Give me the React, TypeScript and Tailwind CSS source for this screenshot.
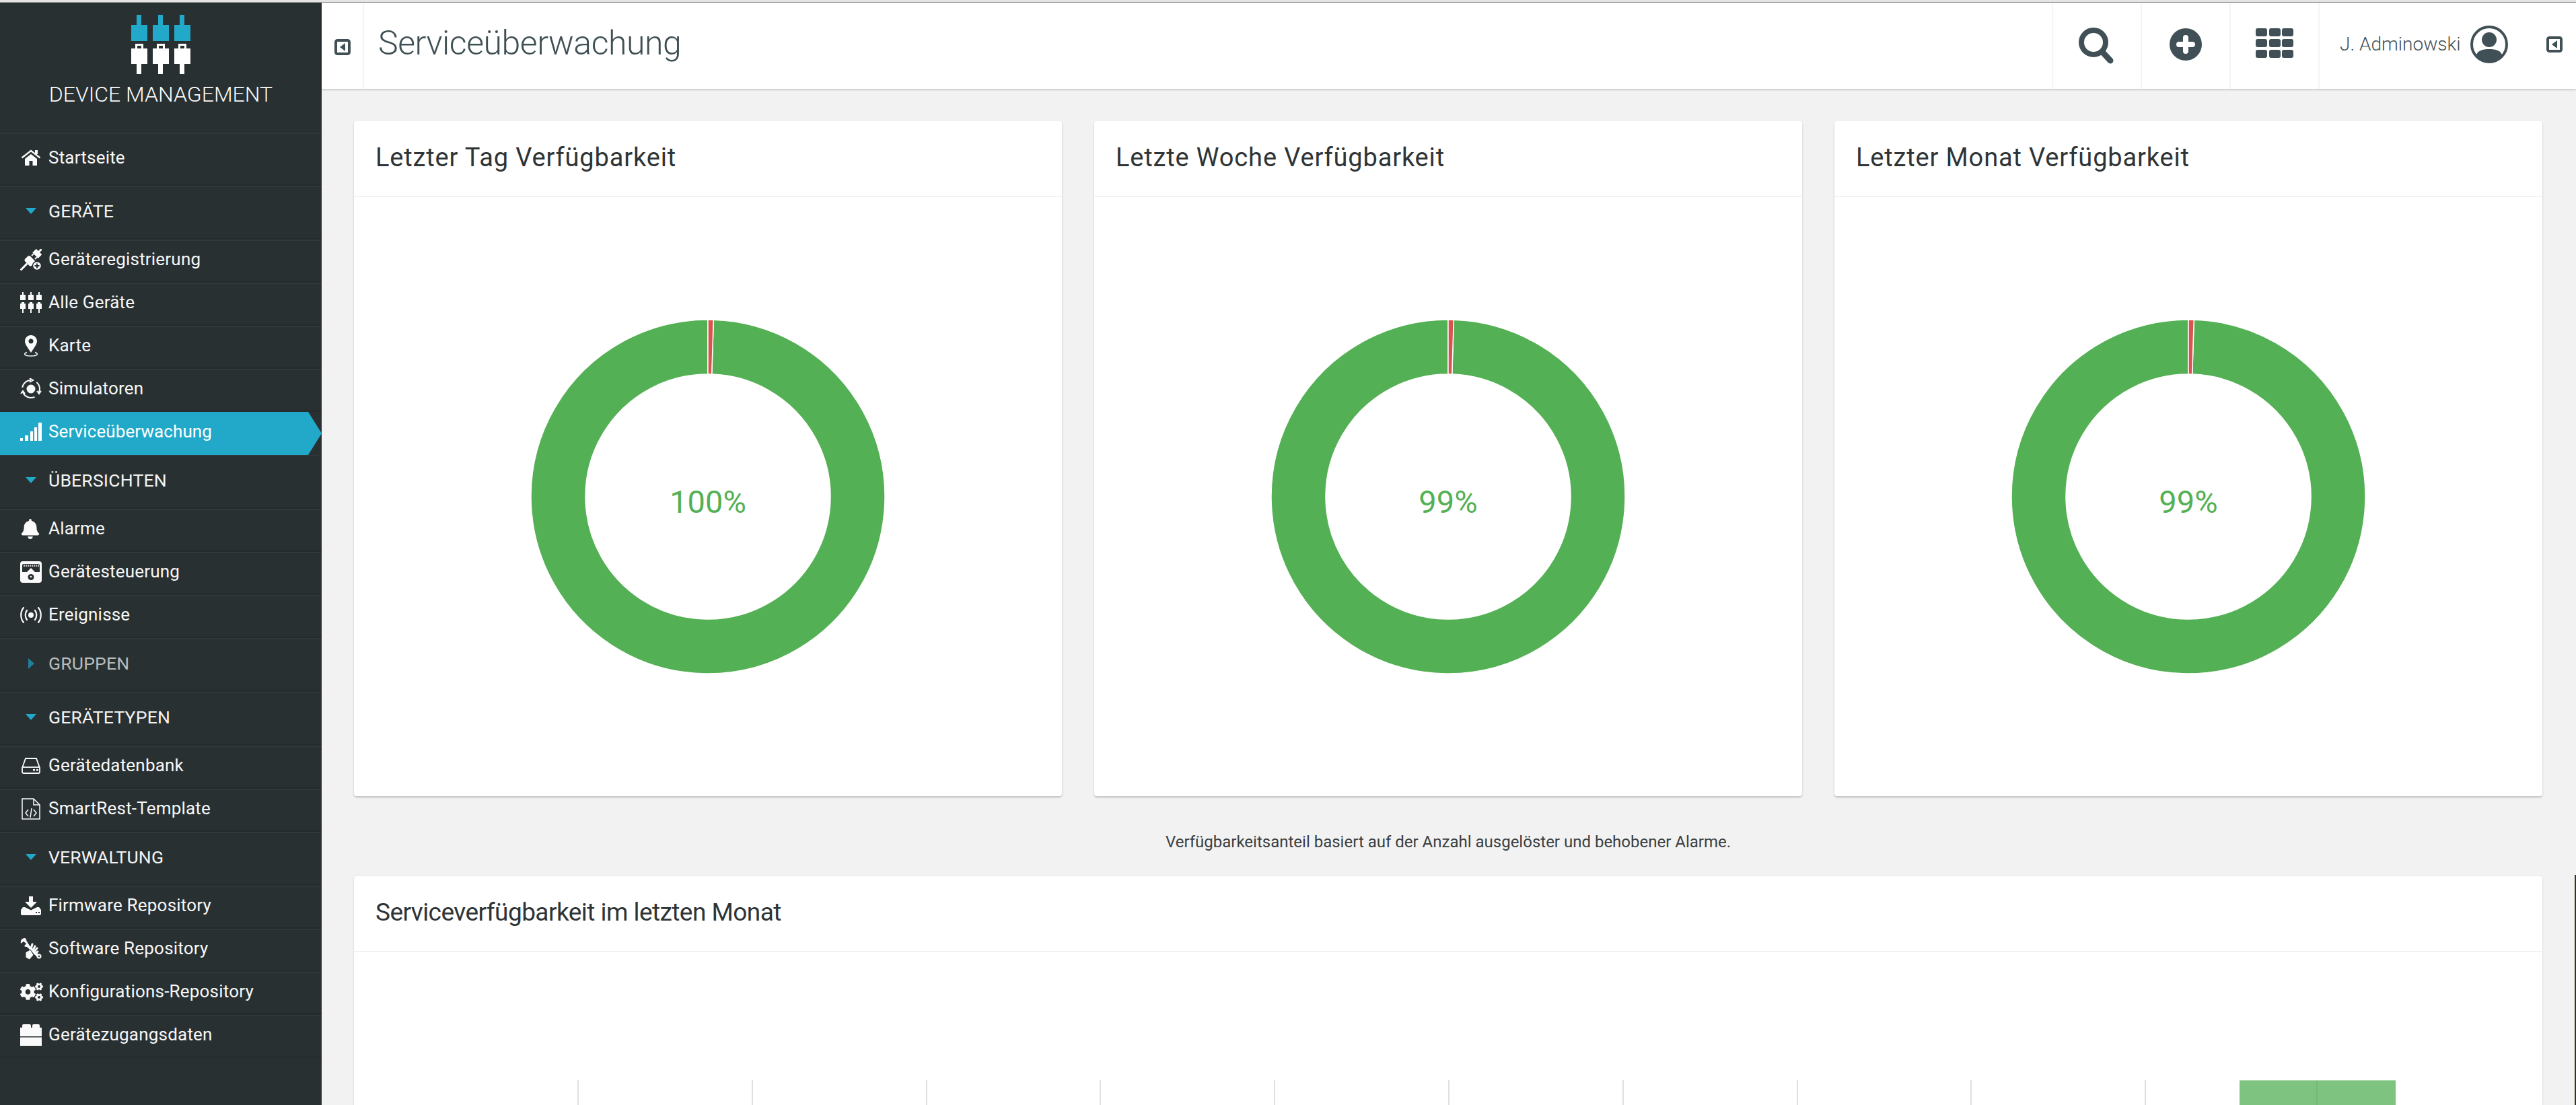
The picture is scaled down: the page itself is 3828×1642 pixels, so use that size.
import { FaBell, FaCogs } from 'react-icons/fa'

const ACCENT = '#22a9c9'
const SLATE = '#415056'
const DARK = '#293032'

function Logo() {
  return (
    <svg width="88" height="88" viewBox="0 0 88 88" className="block">
      {[0, 32, 64].map(x => (
        <g key={x}>
          <g fill={ACCENT}>
            <rect x={x + 8} y={0} width={7} height={16} />
            <rect x={x} y={15} width={24} height={24} />
          </g>
          <g fill="#ffffff">
            <path fillRule="evenodd" d={`M${x + 6} 43h12v7h6v23H${x}V50h6zM${x + 9} 46v4h6v-4z`} />
            <rect x={x + 8} y={72} width={7} height={16} />
          </g>
        </g>
      ))}
    </svg>
  )
}

function HomeIcon() {
  return (
    <svg width="30" height="24" viewBox="0 0 30 24" className="ml-[1px]">
      <path d="M1.5 12.5L15 2l13.5 10.5" fill="none" stroke="#fafafa" strokeWidth="2.4" />
      <rect x="21" y="1" width="4" height="6" fill="#fafafa" />
      <path d="M6 14l9-7 9 7v10h-6.5v-7h-5v7H6z" fill="#fafafa" />
    </svg>
  )
}

function DevicesIcon() {
  return (
    <svg width="32" height="32" viewBox="0 0 32 32" fill="#fafafa">
      {[0, 12, 24].map(x => (
        <g key={x}>
          <rect x={x + 3} y="0" width="2" height="4" />
          <rect x={x} y="4" width="8" height="8" rx="0.5" />
          <rect x={x + 2} y="15" width="4" height="3" />
          <rect x={x} y="17" width="8" height="8" rx="0.5" />
          <rect x={x + 3} y="25" width="2" height="6" />
        </g>
      ))}
    </svg>
  )
}

function PlugPlusIcon() {
  return (
    <svg width="32" height="32" viewBox="0 0 32 32">
      <g fill="#fafafa" transform="rotate(45 16 16)">
        <rect x="14.5" y="-6.5" width="3" height="6" />
        <rect x="10" y="-1" width="12" height="8" rx="1" />
        <rect x="11.5" y="7" width="2" height="4" />
        <rect x="18.5" y="7" width="2" height="4" />
        <rect x="9" y="13" width="14" height="11" rx="3" />
        <rect x="14.5" y="24" width="3" height="14" />
      </g>
      <circle cx="25" cy="25" r="6.5" fill="#fafafa" stroke={DARK} strokeWidth="1.5" />
      <path d="M25 21.5v7M21.5 25h7" stroke={DARK} strokeWidth="2" />
    </svg>
  )
}

function PinIcon() {
  return (
    <svg width="32" height="32" viewBox="0 0 32 32">
      <path fillRule="evenodd" fill="#fafafa" d="M16 0c5 0 9 4 9 9 0 5-6 12-9 17-3-5-9-12-9-17 0-5 4-9 9-9zm0 5.5a3.5 3.5 0 1 0 0 7 3.5 3.5 0 0 0 0-7z" />
      <path d="M10 25.5c-6 2-4 5.5 6 5.5s12-3.5 6-5.5" fill="none" stroke="#fafafa" strokeWidth="1.6" />
    </svg>
  )
}

function SimulatorIcon() {
  return (
    <svg width="32" height="32" viewBox="0 0 32 32" fill="none" stroke="#fafafa" strokeWidth="2">
      <circle cx="16" cy="16" r="6.5" fill="#fafafa" stroke="none" />
      <path d="M3.2 13.7A13 13 0 0 1 16 3M24.4 6A13 13 0 0 1 27.8 21.5M21.5 27.8A13 13 0 0 1 3.8 20.4" />
      <path d="M14 0l5 3-5 3M25 19l3 4 3-4M1 23l3-4 3 4" />
    </svg>
  )
}

function SignalIcon() {
  return (
    <svg width="32" height="28" viewBox="0 0 32 28" fill="#ffffff">
      <rect x="0" y="23" width="4" height="4" />
      <rect x="7" y="19" width="5" height="8" />
      <rect x="15" y="13" width="4" height="14" />
      <rect x="21" y="7" width="4" height="20" />
      <rect x="27" y="0" width="5" height="27" />
    </svg>
  )
}

function GaugeIcon() {
  return (
    <svg width="32" height="32" viewBox="0 0 32 32">
      <rect width="32" height="32" rx="4" fill="#fafafa" />
      <path d="M3 6a2 2 0 0 1 2-2h22a2 2 0 0 1 2 2v10H3z" fill={DARK} />
      <path d="M6 5v3M9 5v3M12 5v3M15 5v3M18 5v3M21 5v3M24 5v3M27 5v3" stroke="#fafafa" strokeWidth="1.4" />
      <path d="M16 10l6 6H10z" fill="#fafafa" />
      <circle cx="16" cy="23.5" r="4.5" fill={DARK} />
      <circle cx="16" cy="23" r="1.3" fill="#fafafa" />
    </svg>
  )
}

function BroadcastIcon() {
  return (
    <svg width="32" height="24" viewBox="0 0 32 24" fill="none" stroke="#fafafa" strokeWidth="2.2" strokeLinecap="round">
      <circle cx="16" cy="12" r="4" fill="#fafafa" stroke="none" />
      <path d="M10 5c-3 4-3 10 0 14M22 5c3 4 3 10 0 14" />
      <path d="M5 1C0 7 0 17 5 23M27 1c5 6 5 16 0 22" />
    </svg>
  )
}

function DriveIcon() {
  return (
    <svg width="28" height="24" viewBox="0 0 28 24" fill="none" stroke="#fafafa" strokeWidth="1.8" className="ml-[2px]">
      <path d="M1 15L6 1h16l5 14v6a2 2 0 0 1-2 2H3a2 2 0 0 1-2-2z" />
      <path d="M1 14h26" />
      <rect x="17" y="17" width="3" height="2.5" fill="#fafafa" stroke="none" />
      <rect x="22" y="17" width="3" height="2.5" fill="#fafafa" stroke="none" />
    </svg>
  )
}

function FileCodeIcon() {
  return (
    <svg width="28" height="32" viewBox="0 0 28 32" fill="none" stroke="#fafafa" strokeWidth="1.5" className="ml-[2px]">
      <path d="M1 1h17l9 9v21H1z" />
      <path d="M18 1v9h9" />
      <path d="M10 17l-4 5 4 5M18 17l4 5-4 5M15 15l-2 14" />
    </svg>
  )
}

function DownloadIcon() {
  return (
    <svg width="30" height="28" viewBox="0 0 30 28" fill="#fafafa" className="ml-[1px]">
      <path d="M12 0h6v8h6l-9 9-9-9h6z" />
      <path fillRule="evenodd" d="M3 16h3l9 4.5L24 16h3l3 4v6a2 2 0 0 1-2 2H2a2 2 0 0 1-2-2v-6zM22 23v2h2v-2zM26 23v2h2v-2z" />
    </svg>
  )
}

function ToolsIcon() {
  return (
    <svg width="32" height="32" viewBox="0 0 32 32">
      <path d="M7 0C2 0 0 4 1 8l4-3 4 3-3 4c3 2 6 1 7-2l-4-7C9 1 8 0 7 0z" fill="#fafafa" />
      <path d="M9 9l18 18" stroke="#fafafa" strokeWidth="4" />
      <circle cx="28" cy="27" r="3.5" fill="#fafafa" />
      <circle cx="28" cy="27" r="1.2" fill={DARK} />
      <path d="M8 21l7-4 5 8-6 7-6-3z" fill="#fafafa" stroke={DARK} strokeWidth="1" />
      <path d="M16 16l2-7M19 18l3-6M21 20l4-5M22 23l4-3" stroke="#fafafa" strokeWidth="3" strokeLinecap="round" />
    </svg>
  )
}

function BlockIcon() {
  return (
    <svg width="32" height="32" viewBox="0 0 32 32" fill="#fafafa">
      <rect x="3" y="0" width="13" height="7" rx="2" />
      <rect x="18" y="0" width="11" height="7" rx="2" />
      <rect x="0" y="5" width="32" height="13" />
      <rect x="0" y="19.5" width="32" height="12.5" />
    </svg>
  )
}

type NavEntry =
  | { kind: 'item'; label: string; icon: React.ReactNode; active?: boolean; tall?: boolean }
  | { kind: 'section'; label: string; open: boolean }

const nav: NavEntry[] = [
  { kind: 'item', label: 'Startseite', icon: <HomeIcon />, tall: true },
  { kind: 'section', label: 'GERÄTE', open: true },
  { kind: 'item', label: 'Geräteregistrierung', icon: <PlugPlusIcon /> },
  { kind: 'item', label: 'Alle Geräte', icon: <DevicesIcon /> },
  { kind: 'item', label: 'Karte', icon: <PinIcon /> },
  { kind: 'item', label: 'Simulatoren', icon: <SimulatorIcon /> },
  { kind: 'item', label: 'Serviceüberwachung', icon: <SignalIcon />, active: true },
  { kind: 'section', label: 'ÜBERSICHTEN', open: true },
  { kind: 'item', label: 'Alarme', icon: <FaBell size={30} color="#fafafa" /> },
  { kind: 'item', label: 'Gerätesteuerung', icon: <GaugeIcon /> },
  { kind: 'item', label: 'Ereignisse', icon: <BroadcastIcon /> },
  { kind: 'section', label: 'GRUPPEN', open: false },
  { kind: 'section', label: 'GERÄTETYPEN', open: true },
  { kind: 'item', label: 'Gerätedatenbank', icon: <DriveIcon /> },
  { kind: 'item', label: 'SmartRest-Template', icon: <FileCodeIcon /> },
  { kind: 'section', label: 'VERWALTUNG', open: true },
  { kind: 'item', label: 'Firmware Repository', icon: <DownloadIcon /> },
  { kind: 'item', label: 'Software Repository', icon: <ToolsIcon /> },
  { kind: 'item', label: 'Konfigurations-Repository', icon: <FaCogs size={34} color="#fafafa" /> },
  { kind: 'item', label: 'Gerätezugangsdaten', icon: <BlockIcon /> },
]

function NavRow({ entry }: { entry: NavEntry }) {
  if (entry.kind === 'section') {
    return (
      <div className={`flex h-[80px] items-center border-t-2 border-b-2 border-t-[#30383a] border-b-[#252b2d] pb-[5px] ${entry.open ? 'text-[#f4f4f4]' : 'text-[#b8bcbd]'}`}>
        <span className="flex w-[72px] justify-center pl-[20px]">
          {entry.open ? (
            <span className="h-0 w-0 border-x-[8px] border-t-[9px] border-x-transparent border-t-[#22a9c9]" />
          ) : (
            <span className="h-0 w-0 border-y-[8px] border-l-[9px] border-y-transparent border-l-[#1f7f97]" />
          )}
        </span>
        <span className="text-[26.5px] tracking-[0.2px]">{entry.label}</span>
      </div>
    )
  }
  if (entry.active) {
    return (
      <div className="h-[64px]">
        <div className="flex h-full items-center bg-[#22a9c9] pb-[5px] pl-[30px] text-white [clip-path:polygon(0_0,458px_0,478px_50%,458px_100%,0_100%)]">
          <span className="flex w-[42px] shrink-0">{entry.icon}</span>
          <span className="text-[26px] tracking-[0.1px]">{entry.label}</span>
        </div>
      </div>
    )
  }
  return (
    <div className={`flex items-center border-t-2 border-b-2 border-t-[#30383a] border-b-[#252b2d] pb-[5px] pl-[30px] text-[#f7f7f7] ${entry.tall ? 'h-[79px]' : 'h-[64px]'}`}>
      <span className="flex w-[42px] shrink-0">{entry.icon}</span>
      <span className="text-[26px] tracking-[0.2px]">{entry.label}</span>
    </div>
  )
}

function CollapseIcon() {
  return (
    <svg width="24" height="24" viewBox="0 0 24 24">
      <rect x="2" y="2" width="20" height="20" rx="2.5" fill="none" stroke={SLATE} strokeWidth="4" />
      <path d="M16 6v12l-8-6z" fill={SLATE} />
    </svg>
  )
}

function Donut({ value }: { value: string }) {
  const size = 526
  const c = size / 2
  const outer = 263
  const inner = 182
  const point = (r: number, deg: number) => {
    const a = ((deg - 90) * Math.PI) / 180
    return `${c + r * Math.cos(a)} ${c + r * Math.sin(a)}`
  }
  const slice = (from: number, to: number) => {
    const large = to - from > 180 ? 1 : 0
    return `M${point(outer, from)}A${outer} ${outer} 0 ${large} 1 ${point(outer, to)}L${point(inner, to)}A${inner} ${inner} 0 ${large} 0 ${point(inner, from)}Z`
  }
  return (
    <div className="relative h-[526px] w-[526px]">
      <svg width={size} height={size} viewBox={`0 0 ${size} ${size}`}>
        <path d={slice(1.8, 360)} fill="#54b054" stroke="#ffffff" strokeWidth="1.5" />
        <path d={slice(0, 1.8)} fill="#d9534f" stroke="#ffffff" strokeWidth="1.5" />
      </svg>
      <div className="absolute inset-x-0 top-[247px] text-center text-[47px] leading-[48px] text-[#54b054]">{value}</div>
    </div>
  )
}

function Card({ title, value }: { title: string; value: string }) {
  return (
    <div className="flex h-[1003px] flex-1 flex-col rounded-[4px] bg-white shadow-[0_2px_3px_rgba(0,0,0,0.2)]">
      <div className="flex h-[113px] items-center border-b-2 border-[#f2f2f2] pb-[3px] pl-[32px] text-[38px] tracking-[0.85px] text-[#2f3436]">{title}</div>
      <div className="flex flex-1 items-start justify-center pt-[182px]">
        <Donut value={value} />
      </div>
    </div>
  )
}

const ticks = Array.from({ length: 10 })

export default function App() {
  return (
    <div className="relative h-[1642px] w-[3828px] overflow-hidden bg-[#f2f2f2] font-['Roboto',sans-serif]">
      <div className="h-[4px] border-b border-[#9a9a9a] bg-[#e4e4e4]" />
      <div className="flex h-[1638px]">
        <aside className="w-[478px] shrink-0 bg-[#293032]">
          <div className="flex h-[193px] flex-col items-center pt-[18px]">
            <Logo />
            <div className="mt-[10px] text-[32px] leading-[40px] font-light text-[#fafafa]">DEVICE MANAGEMENT</div>
          </div>
          {nav.map(entry => (
            <NavRow key={entry.label} entry={entry} />
          ))}
        </aside>

        <div className="flex min-w-0 flex-1 flex-col">
          <header className="z-10 flex h-[128px] items-stretch bg-white shadow-[0_1px_3px_rgba(0,0,0,0.25)]">
            <div className="flex w-[63px] items-center justify-center border-r-2 border-[#f4f4f4] pt-[4px]">
              <CollapseIcon />
            </div>
            <h1 className="flex flex-1 items-center pb-[7px] pl-[21px] text-[50px] font-light tracking-[-0.45px] text-[#3f5054]">Serviceüberwachung</h1>
            <div className="flex w-[132px] items-center justify-center border-l-2 border-[#f4f4f4]">
              <svg width="54" height="54" viewBox="0 0 54 54" fill="none" stroke={SLATE}>
                <circle cx="22" cy="22" r="18" strokeWidth="8" />
                <path d="M35 36l12 13" strokeWidth="9" strokeLinecap="round" />
              </svg>
            </div>
            <div className="flex w-[132px] items-center justify-center border-l-2 border-[#f4f4f4] pb-[4px]">
              <svg width="48" height="48" viewBox="0 0 48 48">
                <circle cx="24" cy="24" r="24" fill={SLATE} />
                <path d="M24 14v20M14 24h20" stroke="#ffffff" strokeWidth="8" strokeLinecap="round" />
              </svg>
            </div>
            <div className="flex w-[132px] items-center justify-center border-l-2 border-[#f4f4f4] pb-[8px]">
              <div className="grid grid-cols-3 gap-x-[2.5px] gap-y-[4px]">
                {Array.from({ length: 9 }).map((_, i) => (
                  <span key={i} className="h-[12px] w-[17px] rounded-[3px] bg-[#415056]" />
                ))}
              </div>
            </div>
            <div className="flex w-[318px] items-center gap-[14px] border-l-2 border-[#f4f4f4] pb-[4px] pl-[30px]">
              <span className="text-[28px] font-light text-[#3f5054]">J. Adminowski</span>
              <svg width="56" height="56" viewBox="0 0 56 56">
                <circle cx="28" cy="28" r="26" fill="none" stroke={SLATE} strokeWidth="4" />
                <circle cx="28" cy="21" r="11" fill={SLATE} />
                <path d="M8 46c2-9 10-11 20-11s18 2 20 11c-5 5-12 8-20 8S13 51 8 46z" fill={SLATE} />
              </svg>
            </div>
            <div className="flex w-[65px] items-center justify-center pb-[4px]">
              <CollapseIcon />
            </div>
          </header>

          <main className="min-h-0 flex-1 pt-[48px] pr-[50px] pl-[48px]">
            <div className="flex gap-[48px]">
              <Card title="Letzter Tag Verfügbarkeit" value="100%" />
              <Card title="Letzte Woche Verfügbarkeit" value="99%" />
              <Card title="Letzter Monat Verfügbarkeit" value="99%" />
            </div>
            <p className="flex h-[119px] items-center justify-center pt-[16px] text-[24px] text-[#3a3f41]">Verfügbarkeitsanteil basiert auf der Anzahl ausgelöster und behobener Alarme.</p>
            <section className="rounded-t-[4px] bg-white shadow-[0_1px_3px_rgba(0,0,0,0.15)]">
              <div className="flex h-[113px] items-center border-b-2 border-[#f2f2f2] pb-[3px] pl-[32px] text-[37px] tracking-[-0.55px] text-[#2f3436]">Serviceverfügbarkeit im letzten Monat</div>
              <div className="relative h-[228px]">
                <div className="absolute inset-x-0 top-[190px] bottom-0 flex pl-[332px]">
                  {ticks.map((_, i) => (
                    <span key={i} className="w-[258.8px] shrink-0 border-l-2 border-[#e0e0e0]" />
                  ))}
                </div>
                <div className="absolute top-[190px] bottom-0 left-[2802px] flex border-t border-[#b0d8b0]">
                  <span className="w-[116px] border-r-2 border-[#74b975] bg-[#7fc380]" />
                  <span className="w-[116px] bg-[#7fc380]" />
                </div>
              </div>
            </section>
          </main>
        </div>
      </div>
      <div className="absolute top-[1300px] right-0 bottom-0 w-[2px] bg-[#3d3212]" />
    </div>
  )
}
